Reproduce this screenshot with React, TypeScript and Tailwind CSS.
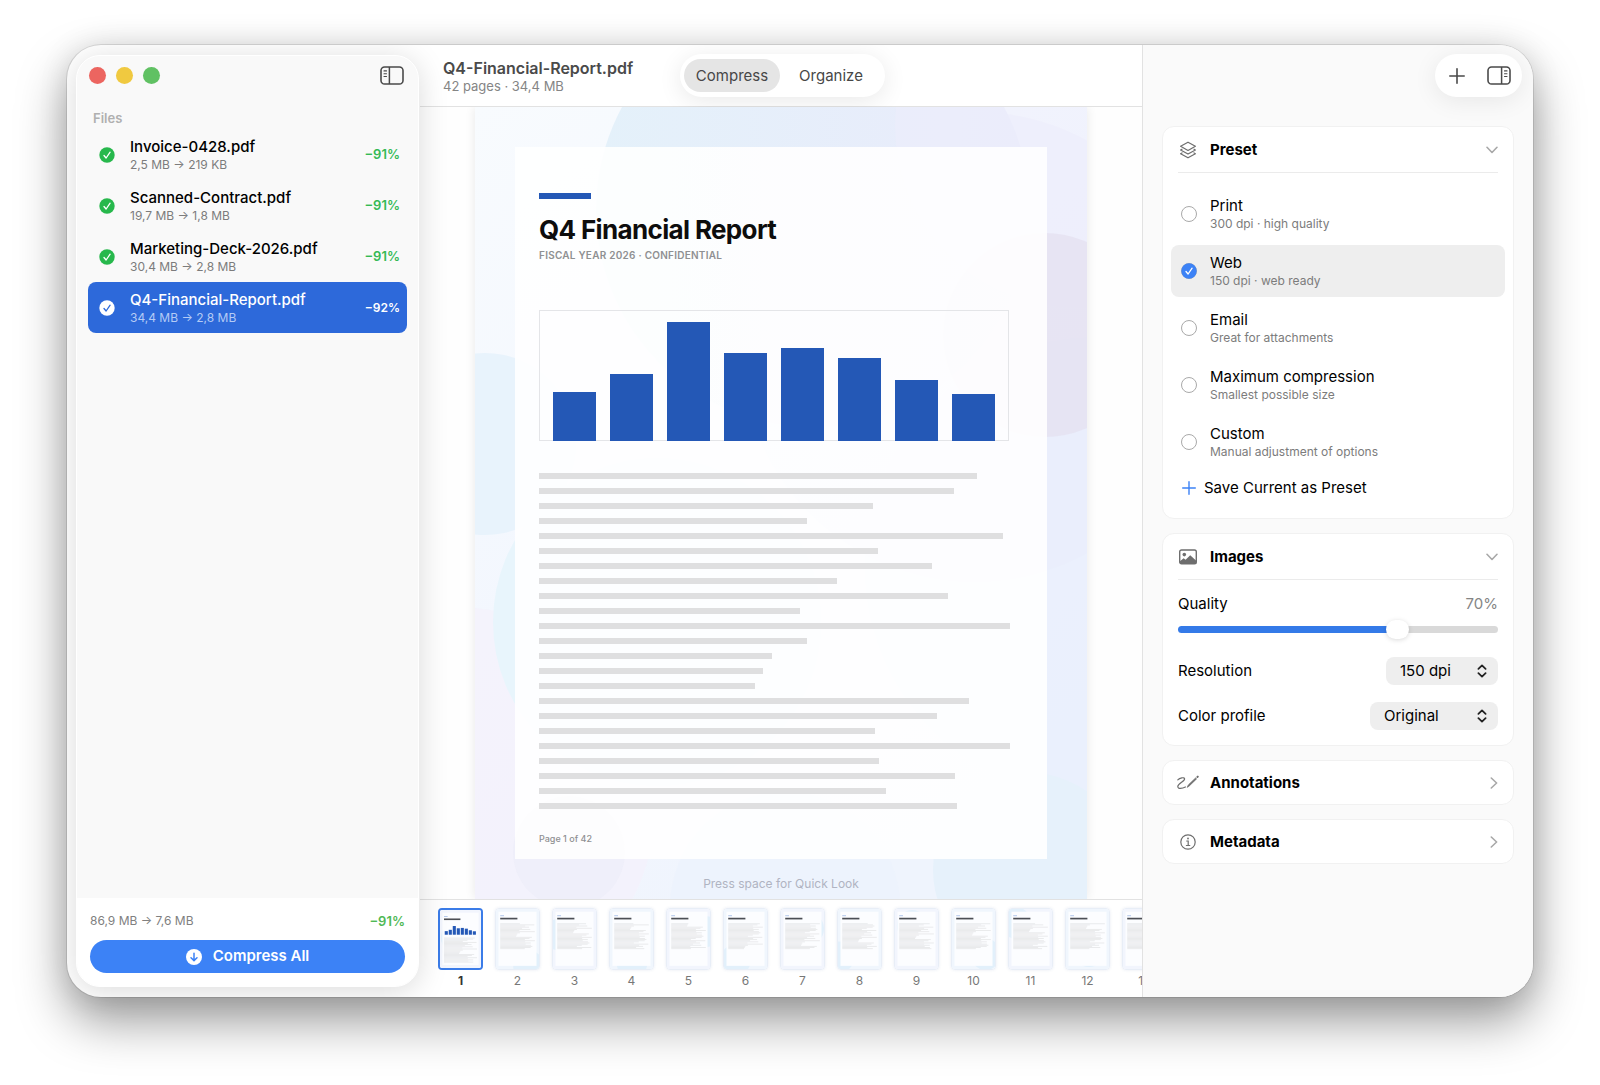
import { useState } from 'react'
import type { ReactNode } from 'react'
import clsx from 'clsx'

const files = [
  { name: 'Invoice-0428.pdf', size: '2,5 MB → 219 KB', saved: '−91%' },
  { name: 'Scanned-Contract.pdf', size: '19,7 MB → 1,8 MB', saved: '−91%' },
  { name: 'Marketing-Deck-2026.pdf', size: '30,4 MB → 2,8 MB', saved: '−91%' },
  { name: 'Q4-Financial-Report.pdf', size: '34,4 MB → 2,8 MB', saved: '−92%' },
]

const presets = [
  { id: 'print', name: 'Print', hint: '300 dpi · high quality' },
  { id: 'web', name: 'Web', hint: '150 dpi · web ready' },
  { id: 'email', name: 'Email', hint: 'Great for attachments' },
  { id: 'max', name: 'Maximum compression', hint: 'Smallest possible size' },
  { id: 'custom', name: 'Custom', hint: 'Manual adjustment of options' },
]

const bars = [49, 67, 119, 88, 93, 83, 61, 47]

// text line lengths, out of 471
const lines = [
  438, 415, 334, 268, 464, 339, 393, 298, 409, 261, 471, 268,
  233, 224, 216, 430, 398, 336, 471, 340, 416, 347, 418,
]

const pages = Array.from({ length: 13 }, (_, i) => i + 1)

function CheckCircle({ fill, mark }: { fill: string; mark: string }) {
  return (
    <svg viewBox="0 0 16 16" className="size-4 shrink-0" aria-hidden="true">
      <circle cx="8" cy="8" r="7.7" fill={fill} />
      <path d="M5 8.5 7.1 11 11.1 5.2" fill="none" stroke={mark} strokeWidth="1.3" strokeLinecap="round" strokeLinejoin="round" />
    </svg>
  )
}

function PanelIcon({ side }: { side: 'left' | 'right' }) {
  return (
    <svg viewBox="0 0 24 19" className={clsx('h-[19px] w-6', side === 'right' && '-scale-x-100')} fill="none" stroke="#4a4a4a" aria-hidden="true">
      <rect x="1" y="1" width="22" height="17" rx="3.6" strokeWidth="1.6" />
      <path d="M9.4 1v17" strokeWidth="1.5" />
      <path d="M4 4.9h2.5M4 7.7h2.5M4 10.5h2.5" strokeWidth="1.1" strokeLinecap="round" />
    </svg>
  )
}

function Plus({ className }: { className: string }) {
  return (
    <svg viewBox="0 0 16 16" className={className} fill="none" stroke="currentColor" strokeLinecap="round" aria-hidden="true">
      <path d="M8 .8v14.4M.8 8h14.4" strokeWidth="1.6" />
    </svg>
  )
}

const layersIcon = (
  <svg viewBox="0 0 18 18" className="size-[18px]" fill="none" stroke="#6e6e6e" strokeWidth="1.2" strokeLinejoin="round" strokeLinecap="round">
    <path d="M9 1.2 16.4 5.3 9 9.4 1.6 5.3Z" />
    <path d="M3 8.2 1.6 9 9 13.1 16.4 9 15 8.2" />
    <path d="M3 11.9 1.6 12.7 9 16.8 16.4 12.7 15 11.9" />
  </svg>
)

const imageIcon = (
  <svg viewBox="0 0 18 16" className="h-4 w-[18px]" fill="none">
    <rect x=".7" y="1" width="16.6" height="13.8" rx="1.8" stroke="#6e6e6e" strokeWidth="1.4" />
    <circle cx="5.3" cy="5.6" r="1.8" fill="#6e6e6e" />
    <path d="M1 12.2 4.6 9.2 6.6 10.7 11.2 6.3 17 11.6V13.6Q17 14.6 16 14.6H2Q1 14.6 1 13.6Z" fill="#6e6e6e" />
  </svg>
)

const scribbleIcon = (
  <svg viewBox="0 0 22 15" className="h-[15px] w-[22px] shrink-0" fill="none" stroke="#6e6e6e" strokeLinecap="round" strokeLinejoin="round">
    <path d="M.8 4.8C2.6 2.9 7.4 1.8 7.6 3.9 7.8 6.2 1.2 8.4.8 11.4.6 14.2 5.4 13.6 8.4 12" strokeWidth="1.2" />
    <path d="M10.4 12 11.3 10 18.6 3 19.5 3.9 12.2 11Z" fill="#6e6e6e" strokeWidth=".8" />
    <path d="M20.4 2 20.8 1.6" strokeWidth="1.9" />
  </svg>
)

const infoIcon = (
  <svg viewBox="0 0 16 16" className="size-4" fill="none" stroke="#6e6e6e" strokeLinecap="round">
    <circle cx="8" cy="8" r="7.2" strokeWidth="1.2" />
    <path d="M6.7 7H8.2V11.4M6.4 11.5H9.8" strokeWidth="1.2" />
    <circle cx="8" cy="4.5" r=".9" fill="#6e6e6e" stroke="none" />
  </svg>
)

function CardHeader({ icon, title, open }: { icon: ReactNode; title: string; open?: boolean }) {
  return (
    <h2>
      <button type="button" aria-expanded={!!open} className={clsx('flex w-full items-center text-left', open ? 'h-[45px]' : 'h-[43px]')}>
        <span className="flex w-5 justify-center">{icon}</span>
        <span className="ml-3 flex-1 text-[15px] leading-5 font-bold">{title}</span>
        {open ? (
          <svg viewBox="0 0 12 8" className="h-2 w-3" fill="none" stroke="#a8a8a8" strokeWidth="1.6" strokeLinecap="round" strokeLinejoin="round" aria-hidden="true">
            <path d="M1 1.3 6 6.5 11 1.3" />
          </svg>
        ) : (
          <svg viewBox="0 0 8 12" className="h-3 w-2" fill="none" stroke="#a8a8a8" strokeWidth="1.6" strokeLinecap="round" strokeLinejoin="round" aria-hidden="true">
            <path d="M1.3 1 6.6 6 1.3 11" />
          </svg>
        )}
      </button>
    </h2>
  )
}

function Card({ children }: { children: ReactNode }) {
  return <section className="rounded-xl border border-[#f1f1f1] bg-white px-[15px]">{children}</section>
}

function SelectRow({ id, label, options, width }: { id: string; label: string; options: string[]; width: string }) {
  return (
    <div className="mt-[17px] flex items-center justify-between">
      <label htmlFor={id} className="text-[15px] leading-5">{label}</label>
      <div className="relative">
        <select id={id} className={clsx('h-7 appearance-none rounded-lg bg-[#eeeeee] pl-3.5 text-[15px] leading-5 outline-none', width)}>
          {options.map((o) => <option key={o}>{o}</option>)}
        </select>
        <svg viewBox="0 0 10 14" className="pointer-events-none absolute top-[7px] right-[11px] h-3.5 w-2.5" fill="none" stroke="#222" strokeWidth="1.8" strokeLinecap="round" strokeLinejoin="round" aria-hidden="true">
          <path d="M1.4 4.8 5 1.4 8.6 4.8M1.4 9.2 5 12.6 8.6 9.2" />
        </svg>
      </div>
    </div>
  )
}

function Sidebar() {
  const [selected, setSelected] = useState(3)

  return (
    <aside className="relative z-10 flex w-[353px] shrink-0 flex-col py-2.5 pr-px pl-[9px]">
      <div className="flex flex-1 flex-col overflow-hidden rounded-3xl border border-white bg-[#f9f9f9] shadow-[0_4px_30px_rgba(0,0,0,0.15)]">
        <div className="flex items-center gap-2.5 pt-2.5 pr-3.5 pl-3">
          <span className="size-[17px] rounded-full bg-[#ec6560]" />
          <span className="size-[17px] rounded-full bg-[#f0c940]" />
          <span className="size-[17px] rounded-full bg-[#60c163]" />
          <button type="button" aria-label="Toggle sidebar" className="ml-auto"><PanelIcon side="left" /></button>
        </div>

        <h2 className="mt-[25px] pl-4 text-[13px] leading-4 font-semibold text-[#b0b0b0]">Files</h2>
        <ul className="mt-[3px] px-[11px]">
          {files.map((f, i) => {
            const on = i === selected
            return (
              <li key={f.name}>
                <button
                  type="button"
                  onClick={() => setSelected(i)}
                  className={clsx('flex h-[51px] w-full items-center rounded-lg pr-[7px] pl-[11px] text-left', on && 'bg-[#2d69da] text-white')}
                >
                  <CheckCircle fill={on ? '#fff' : '#27b84c'} mark={on ? '#2d69da' : '#fff'} />
                  <span className="ml-[15px] flex-1">
                    <span className="block text-[15px] leading-5 font-medium">{f.name}</span>
                    <span className={clsx('block text-xs leading-4', on ? 'text-[#b4cbf5]' : 'text-[#7c7c7c]')}>{f.size}</span>
                  </span>
                  <span className={clsx('font-semibold', on ? 'text-xs font-bold' : 'text-[13px] text-[#34b955]')}>{f.saved}</span>
                </button>
              </li>
            )
          })}
        </ul>

        <div className="mt-auto bg-white px-[13px] pt-[15px] pb-[13px]">
          <div className="flex items-center justify-between leading-4">
            <span className="text-xs text-[#808080]">86,9 MB → 7,6 MB</span>
            <span className="text-[13px] font-semibold text-[#4fb956]">−91%</span>
          </div>
          <button type="button" className="mt-[11px] flex h-[33px] w-full items-center justify-center gap-[11px] rounded-full bg-[#3c82f6] text-[15px] font-semibold text-white">
            <svg viewBox="0 0 16 16" className="size-4" aria-hidden="true">
              <circle cx="8" cy="8" r="8" fill="#fff" />
              <path d="M8 4.2v7.2M5 8.7 8 11.6 11 8.7" fill="none" stroke="#3c82f6" strokeWidth="1.5" strokeLinecap="round" strokeLinejoin="round" />
            </svg>
            Compress All
          </button>
        </div>
      </div>
    </aside>
  )
}

function PageArt() {
  return (
    <svg viewBox="0 0 612 792" preserveAspectRatio="none" className="absolute inset-0 size-full" aria-hidden="true">
      <defs>
        <linearGradient id="base" x1="0" y1="0" x2=".6" y2="1">
          <stop offset="0" stopColor="#f8fbfe" />
          <stop offset=".5" stopColor="#f3f7fe" />
          <stop offset="1" stopColor="#eff4fd" />
        </linearGradient>
        <linearGradient id="sky" x1="0" y1="0" x2="1" y2="0">
          <stop offset="0" stopColor="#e4f1fa" />
          <stop offset="1" stopColor="#e9ebfb" />
        </linearGradient>
      </defs>
      <rect width="612" height="792" fill="url(#base)" />
      <circle cx="500" cy="240" r="235" fill="#eeeefb" opacity=".8" />
      <circle cx="338" cy="103" r="217" fill="url(#sky)" />
      <circle cx="600" cy="20" r="180" fill="#eeedfb" opacity=".5" />
      <circle cx="620" cy="460" r="230" fill="#e8eefc" opacity=".7" />
      <circle cx="570" cy="228" r="102" fill="#e4e0f0" opacity=".7" />
      <circle cx="10" cy="337" r="91" fill="#e8f3fc" />
      <circle cx="-20" cy="700" r="200" fill="#f4f1fb" opacity=".8" />
      <circle cx="182" cy="515" r="164" fill="#e8f5fc" />
      <circle cx="94" cy="745" r="56" fill="#ededf9" opacity=".8" />
      <circle cx="310" cy="800" r="115" fill="#ecf2fc" opacity=".8" />
      <circle cx="555" cy="763" r="97" fill="#e6f1fb" />
    </svg>
  )
}

function DocumentPage() {
  return (
    <div className="relative flex flex-1 flex-col px-10 pt-10 shadow-[0_0_10px_rgba(0,0,0,0.09)]">
      <PageArt />
      <article className="relative flex flex-1 flex-col bg-white/90 pt-[46px] pr-[38px] pb-3 pl-6">
        <div className="h-1.5 w-[52px] bg-[#2458b6]" />
        <h1 className="mt-[15px] text-[26px] leading-8 font-bold tracking-tight text-[#0d0d0d]">Q4 Financial Report</h1>
        <p className="mt-px text-[10px] leading-4 font-semibold tracking-wide text-[#8f9092]">FISCAL YEAR 2026 · CONFIDENTIAL</p>

        <div className="mt-[47px] flex h-[131px] items-end gap-3.5 border border-[#e4e5e8] px-[13px]">
          {bars.map((h, i) => (
            <div key={i} className="-mb-px flex-1 bg-[#2458b6]" style={{ height: h }} />
          ))}
        </div>

        <div className="mt-8 mb-5 flex flex-col gap-[9px]">
          {lines.map((w, i) => (
            <div key={i} className="h-1.5 bg-[#dfdfe0]" style={{ width: `${(w / 470) * 100}%` }} />
          ))}
        </div>

        <p className="mt-auto text-[9px] leading-4 font-medium text-[#8f9092]">Page 1 of 42</p>
      </article>
      <p className="relative h-10 pt-[17px] text-center text-xs leading-4 text-[#b0b4c2]">Press space for Quick Look</p>
    </div>
  )
}

function Thumb({ page, active }: { page: number; active: boolean }) {
  return (
    <button type="button" className="flex w-[45px] shrink-0 flex-col items-center gap-[3px]">
      <span className={clsx('block h-[62px] w-[45px] overflow-hidden rounded', active ? 'border-2 border-[#3b7ce8]' : 'border border-[#e8eef7] shadow-[0_0_3px_rgba(60,90,160,0.12)]')}>
        <svg viewBox="0 0 45 61" preserveAspectRatio="none" className="size-full" aria-hidden="true">
          <rect width="45" height="61" fill={page % 2 ? '#f2f5fd' : '#f0f6fd'} />
          <circle cx={(page * 17) % 45} cy={(page * 29) % 61} r="16" fill="#e2f0fb" />
          <rect x="2.6" y="2.8" width="39.8" height="55" fill="#fcfdff" />
          <rect x="4.4" y="6.4" width="4" height=".9" fill="#a9c0e8" />
          <rect x="4.4" y="8.9" width="18" height="1.7" fill="#4c4f55" />
          {active && bars.map((h, i) => (
            <rect key={i} x={5.2 + i * 4.4} y={26 - h / 13} width="3.4" height={h / 13} fill="#2458b6" />
          ))}
          {lines.map((_, i) => (
            <rect key={i} x="4.4" y={(active ? 29 : 14.5) + i * 1.15} width={lines[(i + page * 3 - 3) % 23] / 13} height="1" fill="#e9eaec" />
          ))}
        </svg>
      </span>
      <span className={clsx('text-xs leading-4', active ? 'font-bold text-[#333]' : 'text-[#777]')}>{page}</span>
    </button>
  )
}

function Viewer() {
  const [mode, setMode] = useState('Compress')

  return (
    <main className="flex min-w-0 flex-1 flex-col">
      <header className="flex h-[62px] shrink-0 items-center border-b border-[#e2e2e2] bg-white pl-[23px]">
        <div className="w-[237px]">
          <p className="text-base leading-5 font-semibold text-[#4a4a4a]">Q4-Financial-Report.pdf</p>
          <p className="text-[13px] leading-4 text-[#858585]">42 pages · 34,4 MB</p>
        </div>
        <div className="relative flex h-[43px] items-center gap-[3px] rounded-full bg-white pr-1.5 pl-1 shadow-[0_4px_24px_rgba(0,0,0,0.09)]">
          {['Compress', 'Organize'].map((m) => (
            <button
              key={m}
              type="button"
              aria-pressed={m === mode}
              onClick={() => setMode(m)}
              className={clsx('h-[33px] w-24 rounded-full pt-px text-[15px] text-[#474747]', m === mode && 'bg-[#e5e5e5]')}
            >
              {m}
            </button>
          ))}
        </div>
      </header>

      <div className="flex flex-1 flex-col overflow-hidden bg-[#fefefe] px-[55px]">
        <DocumentPage />
      </div>

      <nav aria-label="Pages" className="flex shrink-0 gap-3 overflow-hidden border-t border-[#e2e2e2] bg-white py-2 pl-[18px]">
        {pages.map((p) => <Thumb key={p} page={p} active={p === 1} />)}
      </nav>
    </main>
  )
}

function Inspector() {
  const [preset, setPreset] = useState('web')
  const [quality, setQuality] = useState(70)

  return (
    <aside className="w-[391px] shrink-0 border-l border-[#e2e2e2] bg-[#fafafa]">
      <div className="flex justify-end pt-[9px] pr-[11px]">
        <div className="flex h-[43px] items-center gap-[22px] rounded-full bg-white pr-[11px] pl-3.5 text-[#4a4a4a] shadow-[0_4px_24px_rgba(0,0,0,0.08)]">
          <button type="button" aria-label="Add files"><Plus className="size-4" /></button>
          <button type="button" aria-label="Toggle inspector"><PanelIcon side="right" /></button>
        </div>
      </div>

      <div className="mt-[29px] flex flex-col gap-3.5 px-[19px] pb-5">
        <Card>
          <CardHeader icon={layersIcon} title="Preset" open />
          <div className="h-px bg-[#ebebeb]" />
          <fieldset aria-label="Preset" className="-mx-[7px] flex flex-col gap-[5px] pt-[15px]">
            {presets.map((p) => (
              <label key={p.id} className={clsx('flex h-[52px] items-center rounded-lg pl-2.5', p.id === preset && 'bg-[#eeeeee]')}>
                <span className="relative size-4">
                  <input
                    type="radio"
                    name="preset"
                    checked={p.id === preset}
                    onChange={() => setPreset(p.id)}
                    className="block size-4 appearance-none rounded-full border border-[#a9a9a9]"
                  />
                  {p.id === preset && <span className="pointer-events-none absolute inset-0"><CheckCircle fill="#3c82f6" mark="#fff" /></span>}
                </span>
                <span className="ml-[13px]">
                  <span className="block text-[15px] leading-5">{p.name}</span>
                  <span className="block text-xs leading-4 text-[#7c7c7c]">{p.hint}</span>
                </span>
              </label>
            ))}
          </fieldset>
          <button type="button" className="mb-2.5 flex h-10 items-center gap-2 pl-1 text-[15px]">
            <Plus className="size-[14px] text-[#3c82f6]" />
            Save Current as Preset
          </button>
        </Card>

        <Card>
          <CardHeader icon={imageIcon} title="Images" open />
          <div className="h-px bg-[#ebebeb]" />
          <div className="pt-3 pb-[15px]">
            <div className="flex items-center justify-between text-[15px] leading-6">
              <label htmlFor="quality">Quality</label>
              <output htmlFor="quality" className="text-[#858585]">{quality}%</output>
            </div>
            <input
              id="quality"
              type="range"
              min={0}
              max={100}
              value={quality}
              onChange={(e) => setQuality(Number(e.target.value))}
              style={{ backgroundImage: `linear-gradient(to right, #347ae8 ${quality}%, #d9d9d9 ${quality}%)` }}
              className="mt-2.5 mb-6 block h-[7px] w-full appearance-none rounded-full [&::-webkit-slider-thumb]:h-[19px] [&::-webkit-slider-thumb]:w-[23px] [&::-webkit-slider-thumb]:appearance-none [&::-webkit-slider-thumb]:rounded-full [&::-webkit-slider-thumb]:bg-white [&::-webkit-slider-thumb]:shadow-[0_1px_5px_rgba(0,0,0,0.15)]"
            />
            <SelectRow id="resolution" label="Resolution" options={['150 dpi', '300 dpi', '72 dpi']} width="w-28" />
            <SelectRow id="profile" label="Color profile" options={['Original', 'sRGB', 'Grayscale']} width="w-32" />
          </div>
        </Card>

        <Card>
          <CardHeader icon={scribbleIcon} title="Annotations" />
        </Card>
        <Card>
          <CardHeader icon={infoIcon} title="Metadata" />
        </Card>
      </div>
    </aside>
  )
}

export default function App() {
  return (
    <div className="flex min-h-screen bg-white px-[67px] pt-[45px] pb-[88px] font-['Inter',sans-serif] text-black">
      <div className="flex min-w-0 flex-1 overflow-hidden rounded-[34px] bg-white shadow-[0_0_0_1px_rgba(0,0,0,0.1),0_0_30px_rgba(0,0,0,0.1),0_24px_50px_rgba(0,0,0,0.4)]">
        <Sidebar />
        <Viewer />
        <Inspector />
      </div>
    </div>
  )
}
